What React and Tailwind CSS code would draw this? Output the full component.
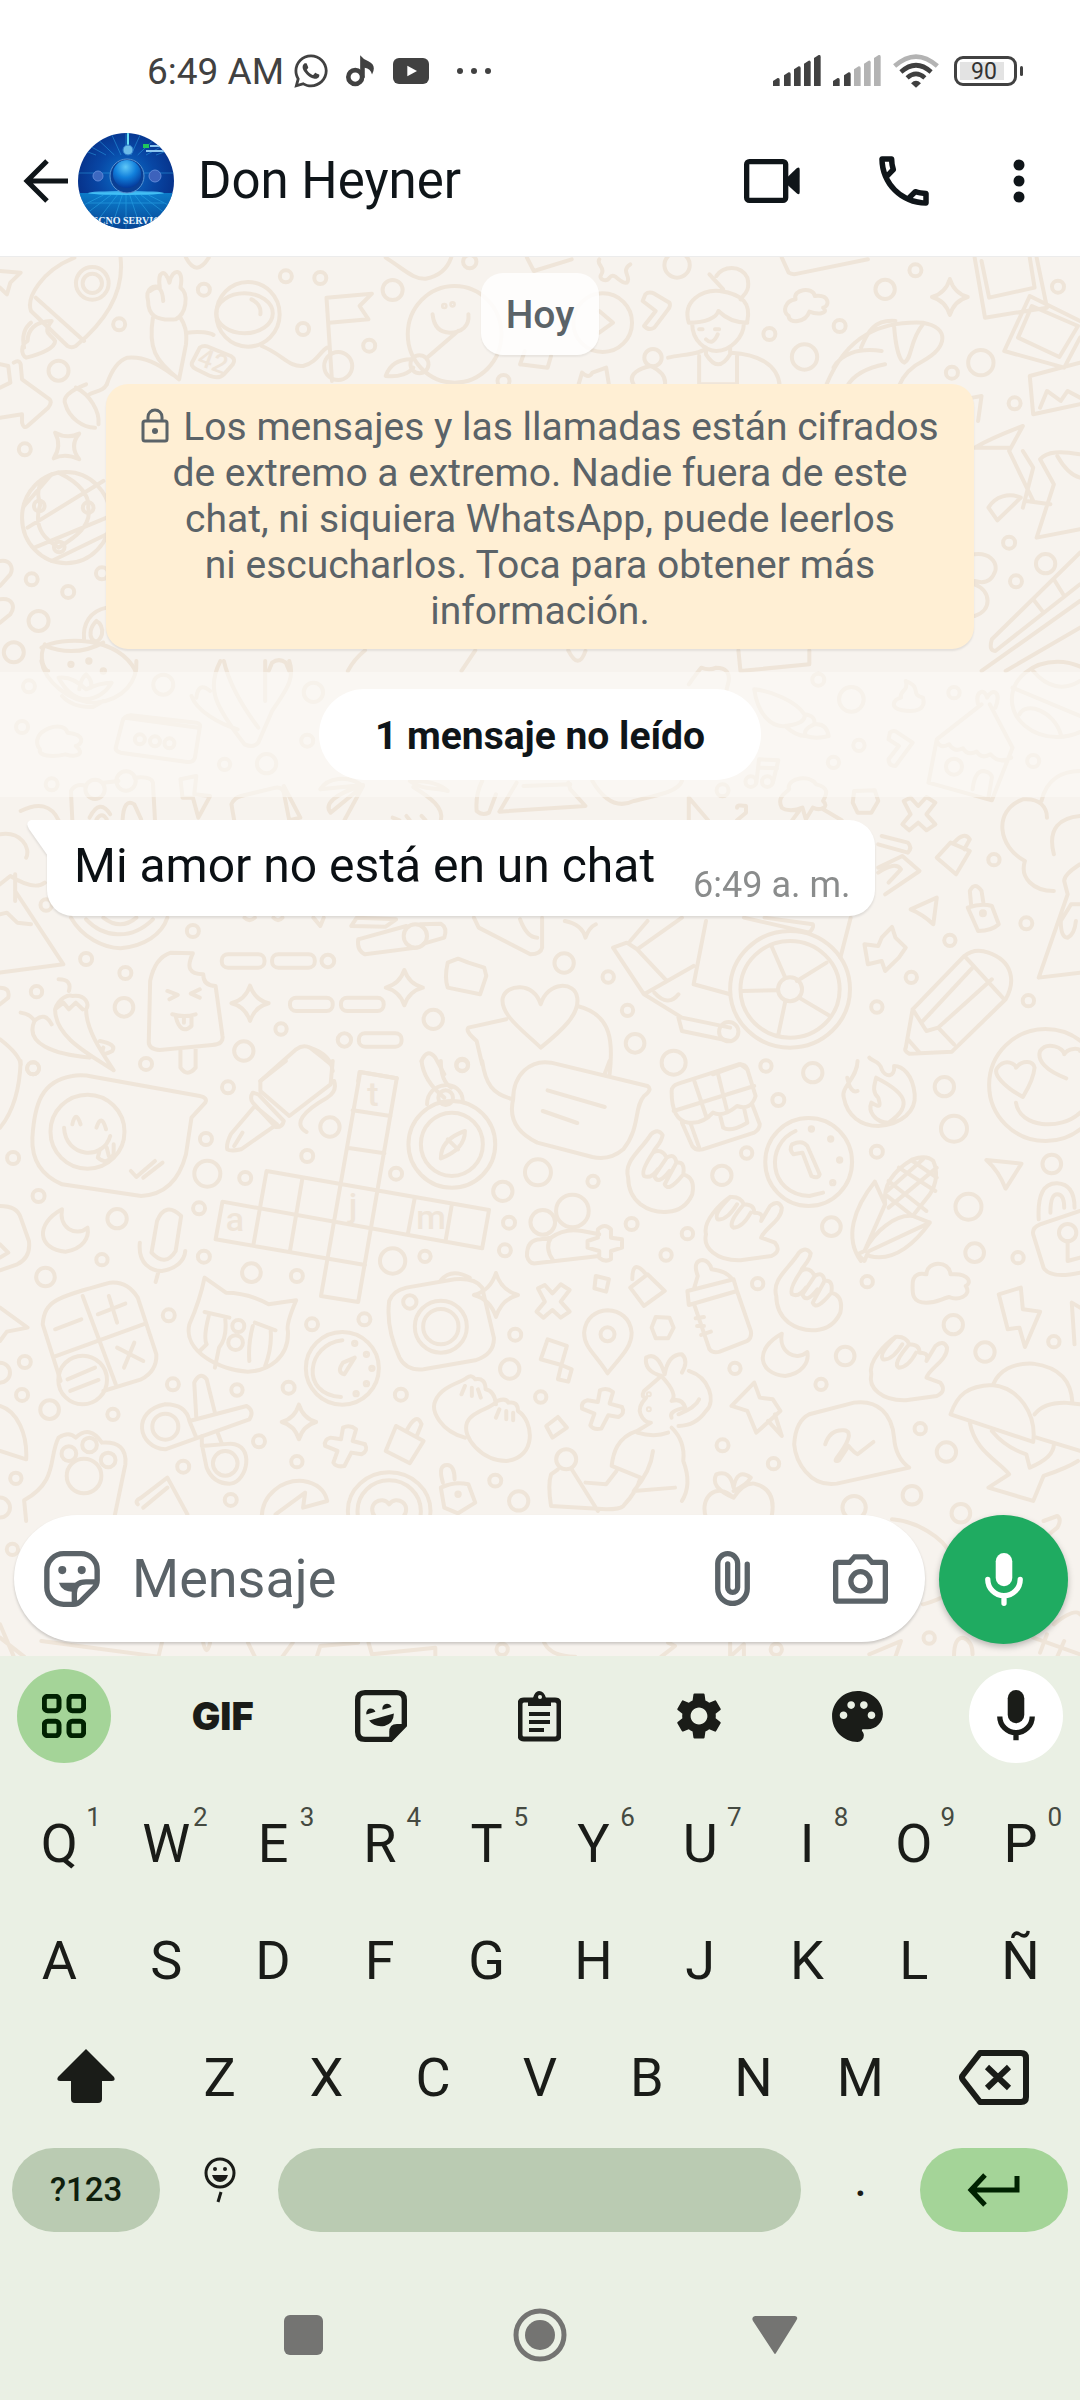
import React from "react";
import { FaWhatsapp } from "react-icons/fa";
import { MdSettings, MdPalette, MdOutlinePhone } from "react-icons/md";

/* ---------- Wallpaper ---------- */

const sparkle = (x, y, w, h) =>
  `M${x} ${y - h} Q${x + w * 0.25} ${y - h * 0.2} ${x + w} ${y} Q${x + w * 0.25} ${y + h * 0.2} ${x} ${y + h} Q${x - w * 0.25} ${y + h * 0.2} ${x - w} ${y} Q${x - w * 0.25} ${y - h * 0.2} ${x} ${y - h}Z`;

const HAND =
  "M912 350 C905 300 930 270 945 220 Q955 200 962 222 C960 250 950 260 948 275 Q960 260 968 290 Q980 275 982 305 Q995 300 992 340 Q1010 350 1005 400 C990 470 950 460 930 430 Q912 400 912 350 M948 275 Q930 330 935 345 Q945 355 955 325 M968 290 L950 345 Q955 375 972 330 M982 305 L965 370 Q970 395 990 345";
const HORNS =
  "M1025 520 C1020 480 1045 430 1060 408 Q1075 405 1080 430 Q1095 430 1095 455 Q1110 455 1105 480 L1118 435 Q1130 415 1135 440 C1135 480 1110 500 1105 530 L1125 545 Q1135 570 1120 585 L1075 598 C1040 600 1020 560 1025 520 M1060 408 Q1035 460 1042 475 Q1055 480 1070 430 M1080 430 Q1055 490 1065 500 Q1078 500 1090 455";
const MOON = "M90 445 C50 490 55 565 95 572 C120 565 130 530 127 500 C110 530 85 500 90 445Z";
const CROSS =
  "M1312 420 L1322 410 L1333 435 L1345 408 L1358 425 L1345 460 L1358 490 L1345 508 L1333 485 L1320 508 L1310 490 L1322 460Z";
const PLUS =
  "M498 1100 Q508 1090 517 1105 L512 1140 L530 1150 Q535 1170 525 1180 L510 1175 L500 1215 Q488 1220 484 1205 L490 1170 L472 1155 Q470 1135 480 1130 L495 1135Z";

const LAYERS = [
  {
    y: -6,
    dots: [[415,76,18],[465,81,18],[570,117,30],[296,116,18],[173,220,18],[440,234,18],[536,284,18],[85,359,30],[36,595,18],[46,985,18],[99,1023,18],[56,1110,30],[20,1204,30],[148,967,18],[682,32,20],[983,42,38],[1329,58,18],[1285,115,29],[1219,225,18],[1117,249,18],[1168,318,38],[1382,365,18],[1536,107,18],[1473,457,18],[1465,875,18],[1518,938,29],[1475,991,18],[731,390,18],[134,97,49],[134,97,29],[491,345,42],[609,340,27],[875,215,88],[948,320,26],[1424,335,38],[57,765,16],[128,770,16],[86,888,16],[645,165,4],[657,160,4]],
    ovals: [[360,190,46,97],[355,187,41,60],[660,250,68,145],[96,800,64,137]],
    paths: [
      "M0 60 L30 65 L15 95 L10 130 L0 110",
      "M108 20 C60 60 38 140 45 180 L98 285 Q104 292 110 285 C160 200 180 110 175 20 M52 140 L122 270",
      "M75 210 C50 210 40 240 40 270 C30 280 30 310 38 320 C60 310 80 290 80 270 C75 250 60 250 75 210 M45 215 Q30 240 35 290",
      "M215 150 C210 110 225 100 232 110 C228 60 240 50 246 95 C250 50 268 50 262 110 C275 130 270 190 255 205 C225 210 215 190 215 150 M222 200 C215 290 225 330 260 385 L270 280 C272 240 268 220 262 200 M218 120 Q235 90 237 150",
      "M272 245 C290 240 305 245 310 252 M155 400 C160 370 170 330 185 320 C210 315 230 340 250 370 M380 285 C410 310 420 350 440 345 C460 335 465 300 475 290 M365 145 Q380 160 378 190",
      "M482 390 L474 140 L540 128 L522 165 L535 205 L478 215",
      "M290 290 Q297 280 305 290 L335 315 Q343 325 338 340 L325 370 Q318 385 305 375 L285 355 Q275 345 280 330Z",
      "M628 190 C630 230 640 245 653 245 C670 245 682 225 680 190 M597 325 C575 325 565 345 560 375 C580 380 595 365 600 350 M620 320 L665 240",
      "M870 180 L890 215 L870 245 M755 340 L795 350 L800 315 M755 340 L762 300",
      "M937 130 Q942 120 950 128 L972 155 Q974 165 970 175 L950 230 Q942 240 935 225 L952 180 L933 150Z",
      "M1155 145 C1150 115 1180 105 1183 135 C1205 130 1205 165 1195 170 C1205 190 1185 190 1175 182 C1170 215 1145 220 1145 195 C1135 180 1140 150 1155 145Z",
      "M1000 215 C990 150 1020 115 1045 120 C1080 130 1090 160 1085 210 M1005 220 C1005 270 1025 300 1040 300 C1060 300 1080 260 1080 215 M1000 215 C1025 215 1040 200 1043 180 C1055 205 1070 215 1085 215 M1030 70 L1050 115 M1040 75 C1050 45 1075 40 1085 80 C1090 120 1080 130 1075 145",
      "M970 320 C990 310 1020 310 1025 290 V310 Q1043 370 1060 310 V290 M1062 305 C1100 310 1130 340 1132 405 M1015 315 V400 H1070 V315 M920 400 C910 370 930 350 945 345 C960 360 968 380 965 405 M1015 235 H1020 M1038 235 H1044 M1025 265 Q1035 285 1042 250",
      "M1200 400 C1230 250 1280 210 1340 215 C1380 230 1375 290 1340 330 C1320 350 1310 380 1305 405 M1300 210 C1270 205 1260 240 1250 290 M1210 350 C1220 310 1245 290 1280 300 M1230 405 C1240 370 1260 350 1285 340 M1298 225 C1300 280 1305 330 1313 335 C1325 320 1320 270 1340 220",
      sparkle(1379, 138, 26, 54),
      "M1415 20 L1430 200 L1520 170 L1505 20 M1425 30 L1436 140 L1502 110 L1495 20 M1568 210 L1495 135 L1458 300 L1545 350 L1568 260 M1498 165 L1478 260 L1538 318 L1565 225Z M1568 335 L1495 375 L1500 490 L1568 460 M1510 470 L1520 420 L1540 450 L1550 420 L1568 440",
      "M1135 20 L1145 65 Q1150 72 1158 68 L1260 25 M560 20 C590 60 600 85 618 83 C640 75 650 50 655 20 M765 20 L775 60 L830 25 M270 20 Q285 80 303 20",
      "M870 25 C865 40 880 50 873 70 C868 85 880 95 885 80 C892 60 900 100 910 95 C918 80 900 60 915 40",
      "M840 400 L845 365 Q855 385 860 365 L880 350 L884 400",
      "M20 335 Q28 325 30 340 L32 385 L72 445 Q76 455 70 470 L40 525 Q34 535 32 515 V490 L0 500 M0 340 L12 345 L15 395 L0 410",
      "M125 400 C100 420 90 440 95 460 C100 500 120 530 138 530 M110 410 C130 430 145 480 143 520 M155 400 C150 420 140 420 130 430",
      "M80 545 Q98 565 115 548 Q100 585 115 625 Q95 605 78 622 Q90 585 80 545Z",
      "M60 690 C50 740 60 750 58 765 C45 850 80 880 85 890 M35 765 L75 670 M40 830 L150 690 M50 890 L155 800 M75 930 L155 850 M85 665 C120 700 130 740 128 770 C135 830 100 870 85 890",
      "M0 930 C15 925 20 950 15 970 L0 1005 M0 1045 C20 1040 22 1070 15 1090 L0 1115",
      "M155 1070 C130 1080 120 1120 122 1165 M140 1110 C120 1150 140 1200 148 1150 C150 1130 145 1115 140 1110 M60 1190 C90 1155 170 1155 197 1260 M65 1180 C55 1220 65 1260 70 1260 M65 1185 Q110 1220 150 1175",
      "M1415 590 C1440 560 1460 545 1485 525 L1465 600 L1500 750 M1415 590 L1465 590 M1435 770 C1445 735 1465 725 1482 740 L1448 808Z M1568 610 C1540 600 1520 600 1510 625 L1530 700 L1505 860 L1568 835 M1485 600 L1500 650 L1485 770 M1535 615 Q1550 670 1568 680 M1490 750 L1525 760",
      "M1568 905 L1440 1165 Q1435 1200 1445 1200 L1568 1000 M1568 1050 L1425 1260 M1568 1130 L1460 1260 M1500 1045 L1515 1085 M1530 985 L1545 1035",
      "M1415 910 C1435 905 1448 930 1445 960 C1440 990 1430 1000 1415 990 M1415 1000 C1440 1020 1440 1080 1415 1095 M1412 440 L1425 435 L1420 510 M390 1260 L395 1235 Q405 1220 415 1235 L420 1260 M1072 1198 L1075 1260 M1175 1198 V1240 L1075 1260",
      "M530 1198 C520 1215 510 1240 505 1260 M690 1198 L670 1260 M825 1198 Q840 1260 850 1200",
    ],
  },
  {
    y: 404,
    dots: [[42,76,18],[237,71,30],[32,198,18],[455,94,29],[446,239,18],[326,310,17],[387,308,29],[75,370,18],[1188,56,18],[1236,115,37],[1385,95,17],[1247,253,17],[1210,304,17],[1500,300,18],[1049,388,18],[203,235,15],[225,241,15],[246,247,15],[67,732,17],[280,810,18],[125,894,18],[182,936,18],[53,992,17],[180,1039,28],[408,1104,17],[354,1170,29],[212,1209,18],[48,1222,18],[819,906,29],[883,948,17],[629,1075,29],[911,1048,17],[922,1147,28],[671,1211,18],[1273,1038,17],[1323,949,17],[1379,838,17],[1490,787,18],[1443,596,17],[1493,1019,17],[476,900,19],[500,1137,20],[1147,985,36],[1058,1112,29],[603,825,35],[138,385,29],[183,360,29],[1090,362,16],[1114,362,16],[1385,317,24],[1427,757,6],[103,10,5],[129,0,5],[150,30,5]],
    ovals: [[1147,985,87,175],[1147,985,72,145],[1535,115,66,113]],
    rects: [[322,880],[395,880],[421,1010],[495,1010],[521,1117]],
    paths: [
      "M60 0 C65 60 100 125 140 125 C180 115 200 60 198 0 M85 50 C95 90 110 115 125 115 C145 110 155 90 162 65 C150 65 135 75 125 85 C115 65 100 45 85 50Z M115 85 Q118 50 125 40 Q135 60 132 80 M90 105 Q105 140 135 138 L150 120",
      "M320 0 C300 80 310 130 355 250 Q368 262 375 245 L395 150 C410 100 430 60 420 0 M325 0 Q335 90 375 200 M385 0 L385 120 M278 105 C285 150 320 190 345 205 M305 90 Q288 60 285 110",
      "M178 180 Q180 165 190 163 L285 185 Q292 188 290 200 L283 290 Q280 305 272 303 L175 275 Q167 270 168 260Z M182 170 L288 200",
      "M60 215 C75 190 95 190 98 215 C125 220 120 250 110 255 C125 280 110 290 95 280 C75 290 55 285 58 265 C50 245 55 225 60 215Z",
      "M105 478 L103 390 Q110 365 125 375 M150 365 L172 360 M195 350 Q220 345 222 365 L225 478 M130 470 Q145 410 160 460 M178 475 Q180 410 195 430 L205 475 M140 475 Q148 450 155 475",
      "M262 355 L285 345 L282 400 L305 405 L288 470 L280 410 L265 410Z",
      "M340 478 L336 430 Q340 410 350 405 L400 380 Q410 378 412 395 L420 478 M412 375 L436 470 L420 478",
      "M465 385 C475 350 505 340 527 375 L480 455 C470 430 485 400 527 372 L465 385 M527 375 L500 478 M595 360 C610 385 630 380 650 390 C640 370 620 360 600 360 M600 378 C625 410 645 440 640 478 M570 470 L580 478 M590 465 L595 478 M612 465 L618 478",
      "M700 360 Q690 400 692 450 Q700 465 710 455 L720 400 M750 365 L725 452 L850 435 L828 385 L825 365 M760 375 L828 370 M860 360 C880 430 900 440 920 420 C960 400 985 390 990 360",
      "M1095 85 C1100 160 1120 200 1140 195 C1160 190 1170 180 1168 160 C1155 120 1120 90 1095 85Z M1168 160 Q1185 165 1182 190 Q1200 185 1203 225 Q1185 235 1170 225 Q1155 225 1140 195 M1182 190 Q1165 205 1170 225",
      "M1098 365 L1102 295 L1130 298 L1122 365 M1102 320 L1128 322",
      "M1135 440 C1125 400 1150 390 1145 380 C1145 350 1175 340 1185 370 C1205 380 1200 400 1195 420 C1205 440 1190 450 1180 440 L1170 475 L1165 440 C1155 450 1140 450 1135 440 M1150 478 L1160 450 M1195 445 L1222 478 M1000 410 L1028 478 M1000 410 V478 M1070 440 Q1070 430 1083 435 V455 L1070 478 M1000 70 Q1010 40 1018 20 Q1030 30 1040 20 Q1060 20 1058 60 L1055 85",
      "M1240 390 L1270 388 L1275 420 L1265 455 L1245 455 L1238 425Z",
      CROSS,
      "M1315 60 C1340 80 1320 100 1340 110 C1345 145 1330 155 1310 148 C1290 140 1298 115 1308 110 C1305 90 1320 90 1315 60",
      "M1348 365 L1360 235 L1425 130 M1437 130 L1470 260 L1440 418 L1348 365 M1412 385 Q1415 330 1428 330 Q1440 335 1440 350 L1435 410 M1360 240 Q1365 265 1378 250 Q1385 275 1398 262 Q1405 285 1418 272 Q1425 295 1438 280 Q1450 310 1468 290 M1420 130 C1415 90 1430 80 1433 110 C1440 80 1455 90 1445 140",
      "M1470 80 L1568 165 M1500 30 C1520 80 1545 90 1568 60 M1480 160 C1490 120 1530 150 1540 220",
      "M1292 215 Q1298 205 1303 215 L1325 245 L1300 315 Q1290 315 1290 295 L1305 255 L1290 235Z",
      "M1530 690 C1500 690 1480 650 1488 600 C1450 560 1440 450 1485 415 C1510 410 1520 440 1520 470 M1568 465 C1540 470 1520 500 1530 580 M1512 420 C1520 350 1545 330 1568 330",
      "M1280 525 L1318 545 Q1325 560 1318 575 L1275 550 M1360 590 L1380 545 L1408 570 L1388 640Z M1385 545 Q1400 510 1408 535 L1400 565 M1275 620 L1310 585 L1335 630 L1285 700 M1275 635 Q1300 600 1308 625 L1290 665 M1322 745 L1360 710 L1355 790 Q1340 760 1322 745Z",
      "M1405 740 Q1425 725 1440 735 L1450 790 Q1440 810 1420 810Z M1410 735 L1408 690 Q1415 660 1425 690 L1428 730",
      "M1295 798 L1300 830 L1315 860 L1305 890 L1285 930 L1280 900 L1260 910 L1255 850 L1275 855 L1280 830Z",
      "M0 520 C30 510 45 560 38 590 M0 670 L15 645 Q50 690 65 665 M22 690 L92 910 L0 935 M22 640 V720 M0 760 L10 755 L25 785 L45 790 M30 450 Q70 410 85 478",
      "M103 770 C120 830 150 860 175 862 C210 855 235 820 243 770 M125 775 C150 830 190 840 222 775 M150 770 Q175 810 198 770 M355 770 Q362 785 370 770 M397 770 Q404 785 410 770 M455 770 L465 795 L470 770 M510 795 L518 770 L575 775 L560 797 L510 795",
      "M248 875 L280 877 C270 920 275 940 295 940 C295 960 300 975 313 975 L323 1125 Q325 1150 308 1152 L232 1167 Q215 1165 216 1140 L218 960 Q225 890 248 875Z M262 1165 V1220 Q272 1250 284 1220 V1160 M243 990 L258 1002 L246 1015 M290 985 L277 998 L290 1010 M250 1060 Q268 1070 284 1060 M255 1066 Q262 1125 278 1095 V1065 M267 1068 V1085",
      sparkle(363, 1027, 27, 53),
      sparkle(587, 980, 27, 53),
      "M520 835 L590 795 M605 860 L530 880 Q518 870 520 835 M610 790 L640 788 Q650 800 645 830 L615 848",
      "M688 770 L695 800 L770 880 Q785 880 787 860 V770 M755 775 Q765 830 780 830 M820 780 Q845 790 850 830 Q855 800 865 790",
      "M650 905 L665 893 L680 905 L703 920 L706 945 L697 1000 L650 980 Q645 950 650 905Z",
      "M785 1160 C760 1110 725 1060 730 1010 C735 970 775 960 785 1030 C795 960 835 960 838 1010 C842 1060 815 1110 785 1160Z M735 1075 L680 1100 Q675 1110 692 1140 L700 1210 M838 1035 C890 1060 890 1150 885 1240",
      "M1120 855 L1140 950 M1200 905 L1157 960 M1078 990 L1128 988 M1205 1065 L1160 1010 M1140 1022 L1130 1120 M890 860 L910 845 L925 865 L990 770 M915 840 L940 780 M890 860 L935 1000 L990 1070 L1060 1100 M935 1000 L1007 915 M968 960 L925 865 M1007 970 L1060 1000 M1007 970 L1025 780 M950 995 Q970 1040 985 1000 M1220 890 L1235 770 M985 1070 L990 1110 L1060 1140 M1080 770 L1175 815 Q1182 800 1180 790 L1110 770",
      "M1325 1045 L1400 885 Q1415 860 1435 875 C1470 900 1475 960 1460 1015 L1382 1172 L1320 1178 Q1312 1170 1315 1160 L1325 1045Z M1325 1045 L1345 1110 L1362 1100 L1385 1150 M1340 1080 L1412 920 M1362 1100 L1440 955 M1400 885 L1458 1015 M1318 1135 L1335 1175",
      "M1568 610 Q1545 640 1545 660 L1550 700 L1508 950 L1568 935 M1568 730 H1555 L1540 780 Q1540 830 1550 830 Q1560 820 1562 780",
      "M85 955 Q105 955 100 990 M80 1045 C85 1010 100 1000 105 1005 C125 1000 130 1030 125 1045 C125 1110 150 1180 165 1228 C130 1180 80 1130 80 1045 L92 1025 L100 1045 L110 1025 L120 1045 M30 1055 Q45 1060 50 1080 C35 1150 80 1180 130 1190 M50 1080 Q65 1050 75 1090 M145 1140 Q170 1150 163 1170 Q145 1190 150 1160",
      "M0 980 Q15 980 12 1010 L0 1030 M0 1135 Q28 1180 30 1210 M378 1260 L430 1165 Q440 1150 450 1160 Q480 1180 483 1230 M450 1160 Q475 1200 480 1210",
      "M612 1200 Q620 1160 632 1190 L645 1240 M520 1260 L522 1233 L576 1252 M1035 1240 L1075 1210 L1085 1225",
    ],
  },
  {
    y: 804,
    dots: [[48,22,18],[671,14,17],[978,5,36],[1112,15,17],[1180,35,29],[1371,77,29],[1130,117,18],[331,79,18],[479,198,29],[299,234,18],[446,285,18],[19,291,18],[301,338,39],[356,351,18],[56,405,18],[289,442,18],[170,473,29],[148,596,17],[296,587,18],[365,635,28],[431,645,18],[570,600,38],[617,586,17],[575,338,18],[730,391,29],[781,334,39],[861,361,17],[739,485,18],[733,568,18],[917,489,18],[998,518,17],[967,582,17],[1048,343,29],[1084,276,17],[1273,272,18],[1385,203,39],[1527,309,28],[1406,437,39],[1207,497,28],[1415,575,28],[1478,590,17],[66,648,28],[245,763,18],[453,790,18],[529,775,18],[36,903,18],[32,1002,18],[72,1046,28],[164,1060,17],[251,970,18],[344,987,17],[419,980,18],[376,1141,18],[431,1202,17],[266,1217,18],[335,1317,18],[23,1252,17],[582,1001,18],[740,924,29],[748,821,18],[785,1008,17],[719,1259,18],[753,1320,29],[1100,668,17],[1259,662,17],[1384,791,29],[1530,842,17],[1227,885,28],[1192,970,17],[1067,922,17],[1430,873,29],[1049,1153,18],[1123,1208,17],[1336,1103,17],[1374,1173,29],[1324,1303,28],[1395,1357,28],[1240,1340,35],[0,935,30],[0,1340,30],[127,212,111],[647,110,22],[831,450,49],[788,484,37],[346,795,18],[342,845,22],[640,797,78],[640,797,53],[595,723,20],[882,820,21],[120,957,73],[240,1097,39],[327,1207,37],[822,1195,30],[122,1245,52],[100,1178,22],[130,1152,22],[157,1197,22],[1550,515,26],[1178,204,5],[1206,234,5],[1219,297,5],[1209,365,5],[515,847,5],[532,880,5],[540,922,5],[532,968,5],[517,998,5],[665,1300,5],[942,1000,3],[942,1045,3]],
    ovals: [[1518,72,82,168],[656,250,63,130],[656,250,45,95],[1174,303,63,132],[497,922,53,109],[565,1350,60,116],[565,1350,46,92]],
    paths: [
      "M105 45 Q118 40 135 47 L290 105 Q302 110 298 125 L278 170 L270 280 Q255 400 205 405 L90 370 Q45 330 47 230 C50 130 60 60 105 45Z M105 190 Q110 145 117 190 M140 200 Q147 155 154 205 M93 200 C95 290 150 300 160 225 M145 265 L142 290 Q155 315 165 280 L165 250 M155 260 L158 285 M190 330 L198 348 L225 300 M208 350 L236 305",
      "M330 265 Q328 250 335 220 L370 135 L402 190 L350 265 Q335 272 330 265Z M340 255 L352 215 M367 95 L375 100 L412 180 Q410 200 400 198 L367 125Q362 110 367 95Z M415 0 L378 60 V90 L420 165 L480 70 L483 0 M485 60 Q490 90 475 110 C440 150 425 190 445 213",
      "M523 33 L576 52 L520 723 L466 705Z M512 148 L567 165 M504 260 L558 277 M387 330 L710 447 M323 422 L700 562 M313 535 L530 612 M323 422 L313 535 M387 330 L368 550 M439 352 L421 570 M602 412 L592 520 M656 430 L647 538 M710 447 L700 562",
      "M675 210 Q675 265 640 292 Q640 235 675 210Z M650 235 L665 265 M620 130 C620 60 670 50 672 120 M612 0 Q615 60 645 110 M640 0 Q640 60 655 80",
      "M745 115 C745 40 770 -5 800 5 L940 75 Q948 85 935 105 C920 140 930 200 905 265 Q885 300 860 288 L780 245 Q735 200 745 115Z M795 88 L878 138 M788 150 L838 186 M700 0 C705 70 715 100 745 115 M885 0 L878 38",
      "M975 90 Q975 75 985 68 L1072 10 Q1082 8 1085 25 L1097 105 Q1090 150 1070 135 Q1050 170 1035 155 Q1020 190 1000 185 Q975 180 975 90Z M978 150 L1095 75 M1008 60 L1025 165 M1042 35 L1055 145 M990 185 L1005 255 Q1010 270 1020 265 L1095 215 Q1103 205 1103 190 L1092 130 M1003 190 L1016 265 M1045 160 L1050 200 Q1060 215 1085 185 L1080 140",
      "M1245 0 C1245 50 1220 80 1225 110 C1230 165 1250 195 1275 195 C1310 190 1330 150 1328 100 C1325 40 1310 15 1298 15 C1300 50 1285 50 1280 25 C1278 0 1265 0 1262 -10 M1230 50 Q1235 100 1245 90 M1272 50 C1310 90 1330 130 1290 185 C1270 185 1260 150 1265 125 C1280 145 1278 130 1275 110 C1265 90 1270 70 1272 50",
      "M1150 250 Q1165 235 1172 255 L1190 340 Q1188 355 1178 345 L1165 275 L1152 280 Q1145 265 1150 250 M1155 210 C1110 250 1115 400 1175 405 L1195 395",
      HAND,
      HORNS,
      "M1250 600 C1225 530 1240 440 1270 362 L1285 430 L1255 570 L1245 580 L1255 600 L1260 575 M1255 570 C1270 510 1300 460 1325 465 L1350 485 C1320 570 1290 600 1262 585 M1262 570 L1350 485 M1285 430 Q1280 350 1325 295 Q1345 280 1355 300 Q1365 350 1350 400 L1325 465 M1290 360 L1345 450 M1285 400 L1325 465 M1305 320 L1358 390 M1325 300 L1360 350 M1360 320 L1290 440 M1340 295 L1288 390",
      "M1432 297 L1483 308 L1460 383Q1450 330 1432 297Z",
      "M1568 450 L1510 490 Q1498 500 1500 520 L1515 620 Q1525 655 1568 635 M1508 475 Q1505 365 1535 367 Q1560 370 1560 440 M1525 455 Q1525 400 1535 400 Q1545 400 1545 440 M1550 540 V600 L1568 590",
      "M0 435 Q25 435 30 470 L42 540 Q45 590 25 610 L0 628 M0 550 L12 575 L0 590",
      MOON,
      "M228 480 Q240 420 263 465 L255 570 Q240 620 220 575Z M203 545 C200 610 220 630 235 630 C255 625 268 600 269 570 M230 632 L226 663",
      "M765 585 Q765 535 785 535 L800 530 Q820 500 845 510 L870 520 M765 585 Q768 610 778 607 L870 585 M800 530 Q790 560 803 598 M868 505 Q878 485 887 505 V530 L903 535 V560 L887 570 V595 Q878 605 870 590 V570 L853 560 V540 L868 530Z",
      "M297 650 L328 695 Q360 695 390 730 L430 718 Q415 790 418 810 C420 890 390 930 360 932 C320 930 265 870 275 790 Q290 720 297 650Z M297 753 L333 770 M303 765 Q295 830 300 850 L290 870 M327 775 Q330 830 318 860 L312 920 M370 785 L400 808 M367 795 Q360 850 362 900 M393 810 Q395 860 385 915",
      "M565 720 Q570 690 590 680 L660 655 Q690 650 700 680 L717 830 Q718 880 690 898 L615 925 Q590 930 580 890 Q560 800 565 720Z M640 658 Q655 620 682 650",
      sparkle(720, 702, 32, 66),
      sparkle(434, 1083, 25, 52),
      "M865 645 L884 655 L880 692 L863 682Z M915 680 L940 640 L965 690 L935 735Z M918 655 Q918 590 938 640",
      "M882 937 C865 880 848 860 848 815 C850 770 865 750 882 748 C900 750 915 770 917 815 C917 860 900 890 882 937Z",
      "M952 768 L972 770 L978 800 L970 832 L952 832 L946 800Z",
      "M998 690 L1065 655 L1070 690 L1000 732Z M1008 680 L1013 645 Q1005 600 1020 597 Q1030 600 1033 625 Q1055 630 1063 655 M1008 732 L1030 865 Q1035 878 1045 872 L1085 840 Q1092 830 1090 810 L1070 690 M1010 772 L1022 768 M1012 795 L1022 795 M1018 822 L1032 812",
      "M1345 640 C1345 600 1378 595 1380 640 C1410 635 1410 670 1402 675 C1412 705 1390 720 1378 708 C1365 715 1360 725 1345 725 C1322 725 1325 690 1325 670 C1325 640 1335 635 1345 640Z",
      "M1450 700 L1482 680 L1485 745 L1510 752 L1488 858 L1480 800 L1463 805Z M1568 740 L1556 725 L1560 850",
      "M62 790 C65 720 80 710 160 665 Q185 660 200 710 L227 880 Q228 930 205 955 L150 990 M62 790 L88 960 M120 705 L168 970 M78 888 L212 787 M80 805 L118 775 M142 760 L182 728 M158 705 L170 785 M170 860 L208 900 M195 845 L180 920 M98 955 L138 920 M102 990 L143 957",
      "M0 740 L40 800 L10 812 L0 840 M30 0 Q28 130 0 200 M0 1035 C25 1050 40 1120 38 1195 L0 1170",
      "M497 838 C445 850 435 1000 495 1008 M515 890 L500 940 Q488 935 498 905Z",
      "M275 1080 Q270 1030 240 1030 C190 1050 200 1160 240 1165 L362 1075 Q370 1050 358 1035 L275 1080 L285 1130 M285 1070 L282 965 Q290 930 300 955 L312 1055 M293 1150 L300 1220 Q310 1270 335 1268 C360 1260 370 1150 335 1148 L293 1155 M315 1110 L322 1148 M293 1155 V1125",
      PLUS,
      "M575 1095 L615 1140 L595 1207 L560 1170Z M590 1110 Q605 1050 612 1090 L605 1125",
      "M675 1130 C640 1110 625 1050 632 1020 C640 975 670 965 678 950 Q685 940 690 955 Q705 950 705 985 Q718 990 720 1030 M735 1200 C700 1200 670 1130 678 1085 C685 1050 712 1045 722 1020 Q735 1010 738 1025 Q752 1020 752 1050 C775 1080 780 1190 735 1200Z M675 975 L670 1000 M685 980 V1005 M694 985 L698 1010 M725 1045 L720 1070 M735 1050 V1075 M745 1055 V1078",
      "M795 835 L823 855 L815 912 L785 895Z M815 912 L830 925 L825 962 L810 955Z M810 1068 L823 1100 L802 1130 L793 1095Z",
      "M938 890 Q955 870 965 940 Q970 880 990 880 Q1000 900 990 935 M938 890 Q935 930 960 945 L935 990 Q930 1010 938 1010 Q925 1040 930 1060 Q935 1085 945 1085 L925 1110 C895 1130 890 1180 888 1215 L930 1250 Q925 1290 905 1335 Q900 1345 880 1345 L800 1335 Q795 1270 800 1240 L810 1225 M960 945 Q985 1000 975 1020 Q990 1010 995 1040 Q970 1050 975 1070 M1000 930 C1030 950 1040 1020 1025 1050 Q1010 1095 985 1095 M985 1060 Q1010 1040 1015 1015 M975 1100 Q995 1140 992 1200 Q1005 1270 990 1320 M925 1115 Q950 1130 970 1115 M948 1170 Q945 1230 920 1290 L980 1280 M850 1265 L880 1270 L895 1230 M830 1225 L868 1350",
      "M1095 965 L1062 1035 L1085 1050 L1098 1115 L1133 1050 L1122 1015 L1103 1010Z M1115 1080 L1135 1125 L1125 1060",
      "M1175 1060 L1240 1025 C1275 1015 1295 1060 1298 1130 Q1300 1190 1320 1220 L1215 1268 C1175 1280 1155 1200 1153 1150 Q1155 1080 1175 1060Z M1198 1150 Q1205 1105 1225 1108 C1240 1110 1230 1150 1215 1190 Q1210 1205 1218 1198 L1232 1155 Q1240 1175 1245 1180 L1268 1143",
      "M1380 1060 C1390 1000 1405 975 1440 972 C1480 980 1505 1060 1500 1143 L1380 1060Z M1442 970 C1450 930 1470 905 1500 908 C1540 920 1555 960 1557 1025 M1502 1060 Q1515 1025 1545 1025 L1568 1030 M1505 1130 L1568 1170 M1408 1085 C1415 1170 1450 1200 1465 1240 L1435 1280 L1500 1320 L1515 1245 Q1550 1220 1565 1200 M1440 1110 Q1460 1160 1490 1180 L1495 1220 Q1530 1190 1530 1150",
      "M38 1380 L35 1318 C85 1260 70 1190 85 1130 Q100 1110 110 1130 Q130 1090 148 1145 Q185 1140 182 1210 L165 1380",
      "M200 1330 Q195 1320 205 1310 L243 1250 L272 1360 M243 1280 L208 1340 M380 1370 C380 1300 410 1255 440 1260 Q470 1270 475 1320 L440 1340 L443 1295 L400 1360",
      "M545 1370 C530 1330 555 1300 565 1330 C575 1300 600 1330 585 1370 M640 1280 Q660 1260 680 1270 L690 1325 L665 1357 L645 1340Z M643 1265 Q635 1210 650 1212 Q660 1215 660 1255",
      "M1025 1370 C1015 1310 1040 1260 1065 1310 Q1080 1265 1095 1268 C1120 1280 1125 1320 1120 1370 M1065 1310 Q1030 1280 1040 1240 Q1060 1225 1065 1280 Q1070 1220 1090 1250 Q1085 1270 1065 1290",
      "M1485 108 C1460 80 1440 40 1448 20 C1460 -10 1475 10 1475 20 C1485 -5 1500 0 1502 20 C1500 60 1490 90 1485 108Z M1548 52 C1520 30 1505 0 1510 -30 C1520 -60 1545 -40 1545 -20 C1550 -40 1568 -40 1568 -30 M1475 125 C1480 200 1540 210 1568 155",
    ],
    moved: [[HAND, 215, 355], [HORNS, 240, 420], [MOON, 1045, 373], [CROSS, -531, 262], [PLUS, 373, -112]],
  },
  {
    y: 1224,
    dots: [[18,205,17],[729,505,17],[1127,505,17],[1349,471,17]],
    paths: [
      "M0 430 L20 527 M0 470 L35 527 M60 480 L230 527 L235 485 M295 485 Q300 530 305 485 M360 485 L370 527 M410 527 L425 485 M460 527 L465 495 L520 485 M535 485 L540 520 L632 500 V527",
      "M790 485 Q800 527 835 527 M960 527 L980 495 L970 485 M1060 485 V527 L1080 490 V527 M1262 520 L1308 480 L1300 527 M1295 115 C1330 120 1370 170 1380 220 M1340 370 Q1380 350 1400 290",
      "M1385 527 Q1385 470 1398 470 Q1412 480 1412 520 M1500 470 L1568 520 M1520 460 L1510 515 M1545 480 L1535 527 M1530 430 Q1560 380 1568 400 M1515 120 L1535 105 Q1542 115 1535 140 L1520 165",
    ],
  },
];

function Wallpaper() {
  return (
    <svg
      aria-hidden="true"
      viewBox="0 0 1080 1400"
      preserveAspectRatio="xMidYMin slice"
      className="absolute inset-0 h-full w-full [&_*]:[vector-effect:non-scaling-stroke]"
      fill="none"
      stroke="#efe5d9"
      strokeWidth="4"
      strokeLinecap="round"
      strokeLinejoin="round"
    >
      {LAYERS.map((l) => (
        <g key={l.y} transform={`translate(0 ${l.y}) scale(0.6888 0.3333)`}>
          {l.dots.map(([x, y, r], i) => (
            <ellipse key={i} cx={x} cy={y} rx={r * 0.484} ry={r} />
          ))}
          {(l.ovals || []).map(([x, y, rx, ry], i) => (
            <ellipse key={i} cx={x} cy={y} rx={rx} ry={ry} />
          ))}
          {(l.rects || []).map(([x, y], i) => (
            <rect key={i} x={x} y={y} width="62" height="40" rx="9" ry="18" />
          ))}
          {l.paths.map((d, i) => (
            <path key={i} d={d} />
          ))}
          {(l.moved || []).map(([d, x, y], i) => (
            <path key={i} d={d} transform={`translate(${x} ${y})`} />
          ))}
        </g>
      ))}
      <g fill="#efe5d9" stroke="none" fontFamily="Roboto, sans-serif" fontWeight="500" fontSize="34" textAnchor="middle">
        <text x="213" y="113" fontSize="26" transform="rotate(20 213 104)">42</text>
        <text x="373" y="849">t</text>
        <text x="353" y="960">j</text>
        <text x="431" y="972">m</text>
        <text x="235" y="974">a</text>
      </g>
    </svg>
  );
}

/* ---------- Icons ---------- */

function NoteIcon() {
  return (
    <svg viewBox="0 0 85 95" className="h-8 w-7" fill="#414141" aria-hidden="true">
      <circle cx="28" cy="66" r="21" fill="none" stroke="#414141" strokeWidth="14" />
      <path d="M43 0 Q52 12 68 18 Q94 30 79 58 Q74 40 57 38 V68 H43Z" />
    </svg>
  );
}

function SignalIcon({ level, label }) {
  const bars = [[0, 74], [33, 57], [63, 39], [93, 22], [123, 5]];
  return (
    <svg viewBox="0 0 144 96" className="h-8 w-12" role="img" aria-label={label}>
      {bars.map(([x, y], i) => (
        <path
          key={x}
          d={`M${x} ${y + 4} L${x + 14} ${y - 5} Q${x + 20} ${y - 6} ${x + 20} ${y} V93 H${x} Z`}
          fill={i < level ? "#414141" : "#b3b3b3"}
        />
      ))}
    </svg>
  );
}

function WifiIcon() {
  return (
    <svg viewBox="0 0 140 102" className="h-[34px] w-[46px]" fill="none" stroke="#3f3f3f" strokeWidth="14" role="img" aria-label="Wi-Fi">
      <path d="M5 36 Q70 -22 135 36" stroke="#b3b3b3" />
      <path d="M24 54 Q70 13 116 54" />
      <path d="M43 72 Q70 48 97 72" />
      <path d="M55 88 Q70 74 85 88 L70 102Z" fill="#3f3f3f" stroke="none" />
    </svg>
  );
}

function MicIcon({ color, cap }) {
  return (
    <svg viewBox="0 0 114 160" className="h-[53px] w-[38px]" aria-hidden="true">
      <rect x="32" y="0" width="50" height="100" rx="25" fill={color} />
      <path d="M8 80 A49 49 0 0 0 106 80 M57 129 V152" fill="none" stroke={color} strokeWidth="16" strokeLinecap={cap} />
    </svg>
  );
}

function Avatar() {
  const rays = [-90, -60, -35, -15, 0, 15, 35, 60, 90];
  return (
    <svg viewBox="0 0 96 96" className="h-24 w-24 rounded-full" role="img" aria-label="Foto de perfil">
      <defs>
        <radialGradient id="sky" cx="50%" cy="45%" r="60%">
          <stop offset="0" stopColor="#0b74cc" />
          <stop offset="0.5" stopColor="#0846a4" />
          <stop offset="1" stopColor="#062a80" />
        </radialGradient>
        <radialGradient id="orb" cx="45%" cy="25%" r="75%">
          <stop offset="0" stopColor="#5fc8f8" />
          <stop offset="0.5" stopColor="#1180dc" />
          <stop offset="1" stopColor="#043a9c" />
        </radialGradient>
        <linearGradient id="floor" x1="0" y1="0" x2="0" y2="1">
          <stop offset="0" stopColor="#0e98e0" />
          <stop offset="1" stopColor="#064f9c" />
        </linearGradient>
      </defs>
      <rect width="96" height="96" fill="url(#sky)" />
      <rect y="60" width="96" height="36" fill="url(#floor)" opacity="0.7" />
      <g stroke="#38bdf8" strokeWidth="1" opacity="0.4">
        {rays.map((r) => (
          <path key={r} d={`M${48 + r / 4} 62 L${48 + r} 96 M${48 + r / 3} 22 L${48 + r} 0`} />
        ))}
        <path d="M0 40 H96 M10 70 H86" />
      </g>
      <path d="M50 0 V14" stroke="#6be0f5" strokeWidth="2" />
      <ellipse cx="48" cy="60" rx="38" ry="2" fill="#4fd0ff" opacity="0.8" />
      <circle cx="49" cy="43" r="17" fill="#0a3f94" stroke="#5c96d2" strokeWidth="1" />
      <circle cx="49" cy="41" r="14" fill="url(#orb)" />
      <circle cx="20" cy="43" r="5" fill="#3d68c0" stroke="#5f88d6" />
      <circle cx="77" cy="43" r="6" fill="#3d62bc" stroke="#5f88d6" />
      <circle cx="50" cy="17" r="5" fill="#6cbbe8" stroke="#2d79c8" />
      <rect x="65" y="11" width="6" height="4" fill="#21c45c" />
      <path d="M72 13 H83 M68 18 H86" stroke="#8cc6f0" strokeWidth="2" />
      <text x="48" y="91" textAnchor="middle" fontFamily="Liberation Serif, serif" fontWeight="700" fontSize="10" fill="#e8f4ff">
        TECNO SERVICE
      </text>
    </svg>
  );
}

/* ---------- Keyboard ---------- */

const ROW1 = ["Q", "W", "E", "R", "T", "Y", "U", "I", "O", "P"];
const ROW2 = ["A", "S", "D", "F", "G", "H", "J", "K", "L", "Ñ"];
const ROW3 = ["Z", "X", "C", "V", "B", "N", "M"];

function Key({ children, hint }) {
  return (
    <button type="button" className="relative flex h-[117px] items-center justify-center pt-1 text-[54px] leading-none text-[#1a1c18]">
      {children}
      {hint && <span className="absolute right-3 top-[21px] text-[26px] leading-none text-[#454a41]">{hint}</span>}
    </button>
  );
}

function Tool({ label, children, className = "" }) {
  return (
    <button type="button" aria-label={label} className={`flex h-[94px] w-[94px] items-center justify-center rounded-full ${className}`}>
      {children}
    </button>
  );
}

function Keyboard() {
  return (
    <section aria-label="Teclado" className="bg-[#eaf0e4] text-[#1a1c18]">
      <div className="flex justify-between px-[17px] pb-5 pt-[13px]">
        <Tool label="Funciones" className="bg-[#a4d498]">
          <svg viewBox="0 0 132 132" className="h-11 w-11" fill="none" stroke="#002201" strokeWidth="15">
            <rect x="7" y="7" width="44" height="43" rx="10" />
            <rect x="81" y="7" width="44" height="43" rx="10" />
            <rect x="7" y="82" width="44" height="43" rx="10" />
            <rect x="81" y="82" width="44" height="43" rx="10" />
          </svg>
        </Tool>
        <Tool label="GIF" className="font-['Inter',sans-serif] text-[38px] font-black">GIF</Tool>
        <Tool label="Stickers">
          <svg viewBox="0 0 155 155" className="h-[52px] w-[52px]" fill="#1a1c18">
            <path d="M30 8 H125 Q147 8 147 30 V105 L106 147 H30 Q8 147 8 125 V30 Q8 8 30 8Z" fill="none" stroke="#1a1c18" strokeWidth="16" />
            <path d="M102 153 V125 Q102 101 125 101 H153 L108 154Z" />
            <path d="M34 73 A14 14 0 0 1 61 65Z M82 59 A14 14 0 0 1 109 51Z M42 91 L116 70 Q115 100 88 107 Q58 112 42 91Z" />
          </svg>
        </Tool>
        <Tool label="Portapapeles">
          <svg viewBox="0 0 43 52" className="h-[52px] w-[43px]" fill="#1a1c18">
            <path d="M6 10 H37 Q41 10 41 14 V45 Q41 49 37 49 H6 Q2 49 2 45 V14 Q2 10 6 10Z" fill="none" stroke="#1a1c18" strokeWidth="5" />
            <path d="M10 8 H15 Q17 1 21 1 Q26 1 28 8 H33 V16 H10Z" />
            <circle cx="22" cy="7" r="2" fill="#eaf0e4" />
            <path d="M11 22 H32 V26 H11Z M11 30 H32 V34 H11Z M11 38 H26 V42 H11Z" />
          </svg>
        </Tool>
        <Tool label="Ajustes"><MdSettings size={56} /></Tool>
        <Tool label="Temas"><MdPalette size={61} /></Tool>
        <Tool label="Dictado por voz" className="bg-white"><MicIcon color="#1a1c18" cap="butt" /></Tool>
      </div>

      <div className="grid grid-cols-10 px-[6px]">
        {ROW1.map((k, i) => (
          <Key key={k} hint={String((i + 1) % 10)}>{k}</Key>
        ))}
        {ROW2.map((k) => (
          <Key key={k}>{k}</Key>
        ))}
      </div>

      <div className="grid grid-cols-20 px-[6px] [&>*]:col-span-2">
        <button type="button" aria-label="Mayúsculas" className="col-span-3! flex h-[117px] items-center justify-center">
          <svg viewBox="0 0 58 54" className="h-[54px] w-[58px]" fill="#1a1c18">
            <path d="M29 0 L57 28 Q59 32 55 32 H45 V50 Q45 54 41 54 H18 Q14 54 14 50 V32 H3 Q-1 32 1 28Z" />
          </svg>
        </button>
        {ROW3.map((k) => (
          <Key key={k}>{k}</Key>
        ))}
        <button type="button" aria-label="Borrar" className="col-span-3! flex h-[117px] items-center justify-center pt-1">
          <svg viewBox="0 0 70 55" className="h-[55px] w-[70px]" fill="none" stroke="#1a1c18" strokeWidth="6">
            <path d="M21 3 H62 Q67 3 67 8 V47 Q67 52 62 52 H21 L4 30 Q2 27 4 25Z" strokeLinejoin="round" />
            <path d="M28 17 L50 38 M50 17 L28 38" />
          </svg>
        </button>
      </div>

      <div className="grid grid-cols-20 items-center px-[6px] pb-[18px] pt-[14px] [&>*]:col-span-2">
        <button type="button" className="col-span-3! mx-[6px] h-[84px] rounded-full bg-[#bacbb2] text-[33px] font-medium text-[#0f1f0d]">?123</button>
        <button type="button" aria-label="Emojis y coma" className="flex h-[84px] items-start justify-center pt-[9px]">
          <svg viewBox="0 0 32 46" className="h-[46px] w-8" fill="none" stroke="#1a1c18" strokeWidth="3">
            <circle cx="16" cy="16" r="14" />
            <circle cx="11" cy="12" r="2" fill="#1a1c18" stroke="none" />
            <circle cx="21" cy="12" r="2" fill="#1a1c18" stroke="none" />
            <path d="M8 18 H24 Q22 25 16 25 Q10 25 8 18Z" fill="#1a1c18" stroke="none" />
            <path d="M17 35 L14 45" />
          </svg>
        </button>
        <button type="button" aria-label="Espacio" className="col-span-10! ml-[5px] mr-[6px] h-[84px] rounded-full bg-[#bacbb2]" />
        <button type="button" className="flex h-[84px] items-center justify-center pb-3 text-[36px] font-bold">.</button>
        <button type="button" aria-label="Intro" className="col-span-3! mx-[6px] flex h-[84px] items-center justify-center rounded-full bg-[#a4d498]">
          <svg viewBox="0 0 53 34" className="h-[34px] w-[53px]" fill="none" stroke="#002201" strokeWidth="5">
            <path d="M50 3 V17 H4 M18 2 L4 17 L18 32" />
          </svg>
        </button>
      </div>

      <nav aria-label="Sistema" className="flex h-[150px] justify-center gap-[182px] pt-[57px]">
        <button type="button" aria-label="Recientes" className="h-14 w-[54px]">
          <svg viewBox="0 0 54 56" className="h-14 w-[54px]" fill="#747472"><rect x="7" y="8" width="39" height="40" rx="6" /></svg>
        </button>
        <button type="button" aria-label="Inicio" className="h-14 w-[54px]">
          <svg viewBox="0 0 54 56" className="h-14 w-[54px]" fill="#747472">
            <circle cx="27" cy="28" r="24" fill="none" stroke="#747472" strokeWidth="5" />
            <circle cx="27" cy="28" r="15" />
          </svg>
        </button>
        <button type="button" aria-label="Atrás" className="h-14 w-[54px]">
          <svg viewBox="0 0 54 56" className="h-14 w-[54px]" fill="#747472"><path d="M6 9 H46 Q50 10 47 14 L27 46 Q26 48 25 46 L4 14 Q2 10 6 9Z" /></svg>
        </button>
      </nav>
    </section>
  );
}

/* ---------- Page ---------- */

export default function App() {
  return (
    <div className="flex min-h-screen w-full flex-col bg-white font-['Roboto',sans-serif]">
      <div className="flex h-[142px] items-center justify-between pl-[147px] pr-[57px] text-[#414141]">
        <div className="flex items-center">
          <span className="text-[37px] leading-none">6:49 AM</span>
          <FaWhatsapp size={38} className="ml-2" />
          <div className="ml-4"><NoteIcon /></div>
          <svg viewBox="0 0 108 78" className="ml-[19px] h-[26px] w-9" aria-hidden="true">
            <rect width="108" height="78" rx="18" fill="#414141" />
            <path d="M43 23 L72 39 L43 55Z" fill="#fff" />
          </svg>
          <svg viewBox="0 0 34 6" className="ml-7 h-[6px] w-[34px]" fill="#414141" aria-hidden="true">
            <circle cx="3" cy="3" r="3" />
            <circle cx="17" cy="3" r="3" />
            <circle cx="31" cy="3" r="3" />
          </svg>
        </div>
        <div className="flex items-center">
          <SignalIcon level={5} label="Señal 1" />
          <div className="ml-3"><SignalIcon level={2} label="Señal 2" /></div>
          <div className="ml-3"><WifiIcon /></div>
          <div className="ml-[15px] flex h-[30px] w-[63px] rounded-[9px] border-[3px] border-[#414141] p-[3px]">
            <span className="flex w-11 items-center justify-center bg-[#e3e3e3] pl-1 text-[23px] leading-none text-[#333]">90</span>
          </div>
          <span className="ml-[3px] h-[10px] w-[3px] rounded bg-[#414141]" />
        </div>
      </div>

      <header className="flex h-[114px] items-start px-[23px] text-[#0f1519]">
        <button type="button" aria-label="Volver" className="mt-4 flex h-[46px] w-[45px] items-center">
          <svg viewBox="0 0 45 44" className="h-11 w-[45px]" fill="none" stroke="#0f1519" strokeWidth="5">
            <path d="M45 22 H4 M24 2 L4 22 L24 42" />
          </svg>
        </button>
        <div className="-mt-[9px] ml-[10px] shrink-0"><Avatar /></div>
        <h1 className="ml-6 grow text-[51px] leading-[78px]">Don Heyner</h1>
        <button type="button" aria-label="Videollamada" className="mt-4 h-[46px] w-14">
          <svg viewBox="0 0 168 132" className="h-11 w-14" fill="#0f1519">
            <rect x="8" y="8" width="117" height="116" rx="8" fill="none" stroke="#0f1519" strokeWidth="16" />
            <path d="M130 55 L158 28 Q167 22 167 32 V100 Q167 110 158 103 L130 77Z" />
          </svg>
        </button>
        <button type="button" aria-label="Llamar" className="ml-[71px] mt-[6px]"><MdOutlinePhone size={66} /></button>
        <button type="button" aria-label="Más opciones" className="ml-[67px] mr-[23px] mt-4 h-[46px] w-[30px]">
          <svg viewBox="0 0 30 44" className="h-11 w-[30px]" fill="#0f1519">
            <circle cx="15" cy="6" r="5.5" />
            <circle cx="15" cy="22" r="5.5" />
            <circle cx="15" cy="38" r="5.5" />
          </svg>
        </button>
      </header>

      <main className="relative flex grow flex-col overflow-hidden border-t border-[#ececec] bg-[#f7f3ee]">
        <Wallpaper />
        <div className="relative flex grow flex-col items-center pt-4">
          <p className="flex h-[82px] items-center rounded-[22px] bg-white/85 px-[25px] pt-0.5 text-[39px] font-medium text-[#5b6368] shadow-[0_2px_2px_rgba(0,0,0,0.06)]">Hoy</p>

          <p className="mt-[29px] w-full max-w-[868px] rounded-[22px] bg-[#ffefd4] px-7 pb-[15px] pt-5 text-center text-[39px] leading-[46px] text-[#5b6368] shadow-[0_2px_2px_rgba(0,0,0,0.08)]">
            <svg viewBox="0 0 28 36" className="mr-3.5 inline h-9 w-7 align-[-4px]" fill="none" stroke="#5b6368" strokeWidth="3" aria-hidden="true">
              <rect x="2" y="13" width="24" height="20" rx="2" />
              <path d="M7 13 V9 A7 7 0 0 1 21 9 V13" />
              <circle cx="14" cy="23" r="3" fill="#5b6368" stroke="none" />
            </svg>
            Los mensajes y las llamadas están cifrados
            <br />
            de extremo a extremo. Nadie fuera de este
            <br />
            chat, ni siquiera WhatsApp, puede leerlos
            <br />
            ni escucharlos. Toca para obtener más
            <br />
            información.
          </p>

          <div className="mt-[23px] flex w-full justify-center bg-[#fbfaf7]/60 py-[17px]">
            <p className="flex h-[91px] items-center rounded-full bg-white px-14 pt-1 text-[39px] font-bold text-[#0f1519]">1 mensaje no leído</p>
          </div>

          <div className="mt-[23px] flex self-start pl-[27px] drop-shadow-[0_2px_1px_rgba(0,0,0,0.1)]">
            <svg viewBox="0 0 21 36" className="-mr-px h-9 w-[21px]" fill="#fff" aria-hidden="true">
              <path d="M21 0 H4 Q-2 2 2 9 L21 36Z" />
            </svg>
            <div className="flex h-24 rounded-[26px] rounded-tl-none bg-white pl-[27px] pr-6">
              <p className="text-[48px] leading-[92px] text-[#0b1014]">Mi amor no está en un chat</p>
              <time className="ml-[38px] mt-11 text-[36px] leading-[42px] text-[#8a8c8c]">6:49 a. m.</time>
            </div>
          </div>
        </div>

        <form className="relative flex items-start gap-[14px] pb-3 pl-[14px] pr-3" onSubmit={(e) => e.preventDefault()}>
          <div className="flex h-[127px] min-w-0 grow items-center rounded-full bg-white pl-[30px] pr-[37px] shadow-[0_2px_3px_rgba(0,0,0,0.18)]">
            <button type="button" aria-label="Emojis y stickers" className="shrink-0">
              <svg viewBox="0 0 166 167" className="h-14 w-14" fill="#5b6368">
                <g fill="none" stroke="#5b6368" strokeWidth="16">
                  <path d="M58 8 H110 A48 48 0 0 1 158 56 V88 Q158 101 149 110 L113 146 Q101 159 86 159 H58 A50 50 0 0 1 8 109 V58 A50 50 0 0 1 58 8Z" />
                  <path d="M90 157 V125 Q90 92 125 92 H158" />
                </g>
                <circle cx="54" cy="57" r="12" />
                <circle cx="112" cy="57" r="12" />
                <path d="M44 95 H108 L88 122 Q52 122 44 95Z" />
              </svg>
            </button>
            <input
              type="text"
              aria-label="Mensaje"
              placeholder="Mensaje"
              className="ml-8 min-w-0 grow bg-transparent text-[54px] leading-[70px] text-[#0f1519] outline-none placeholder:text-[#5b6368]"
            />
            <button type="button" aria-label="Adjuntar" className="shrink-0">
              <svg viewBox="0 0 105 166" className="h-[55px] w-[35px]" fill="none" stroke="#5b6368" strokeWidth="16" strokeLinecap="round">
                <path d="M97 40 V114 A44 44 0 0 1 8 114 V38 A30 30 0 0 1 68 38 V110 A15 15 0 0 1 38 110 V39" />
              </svg>
            </button>
            <button type="button" aria-label="Cámara" className="ml-[83px] shrink-0">
              <svg viewBox="0 0 166 150" className="h-[50px] w-[55px]" fill="none" stroke="#5b6368" strokeWidth="16">
                <path d="M8 32 Q8 25 16 25 H50 L65 8 H103 L118 25 H150 Q158 25 158 32 V135 Q158 142 150 142 H16 Q8 142 8 135Z" />
                <circle cx="83" cy="82" r="29" />
              </svg>
            </button>
          </div>
          <button type="submit" aria-label="Mensaje de voz" className="flex h-[129px] w-[129px] shrink-0 items-center justify-center rounded-full bg-[#1fab61] shadow-[0_3px_6px_rgba(0,0,0,0.25)]">
            <MicIcon color="#ffffff" cap="round" />
          </button>
        </form>
      </main>

      <Keyboard />
    </div>
  );
}
